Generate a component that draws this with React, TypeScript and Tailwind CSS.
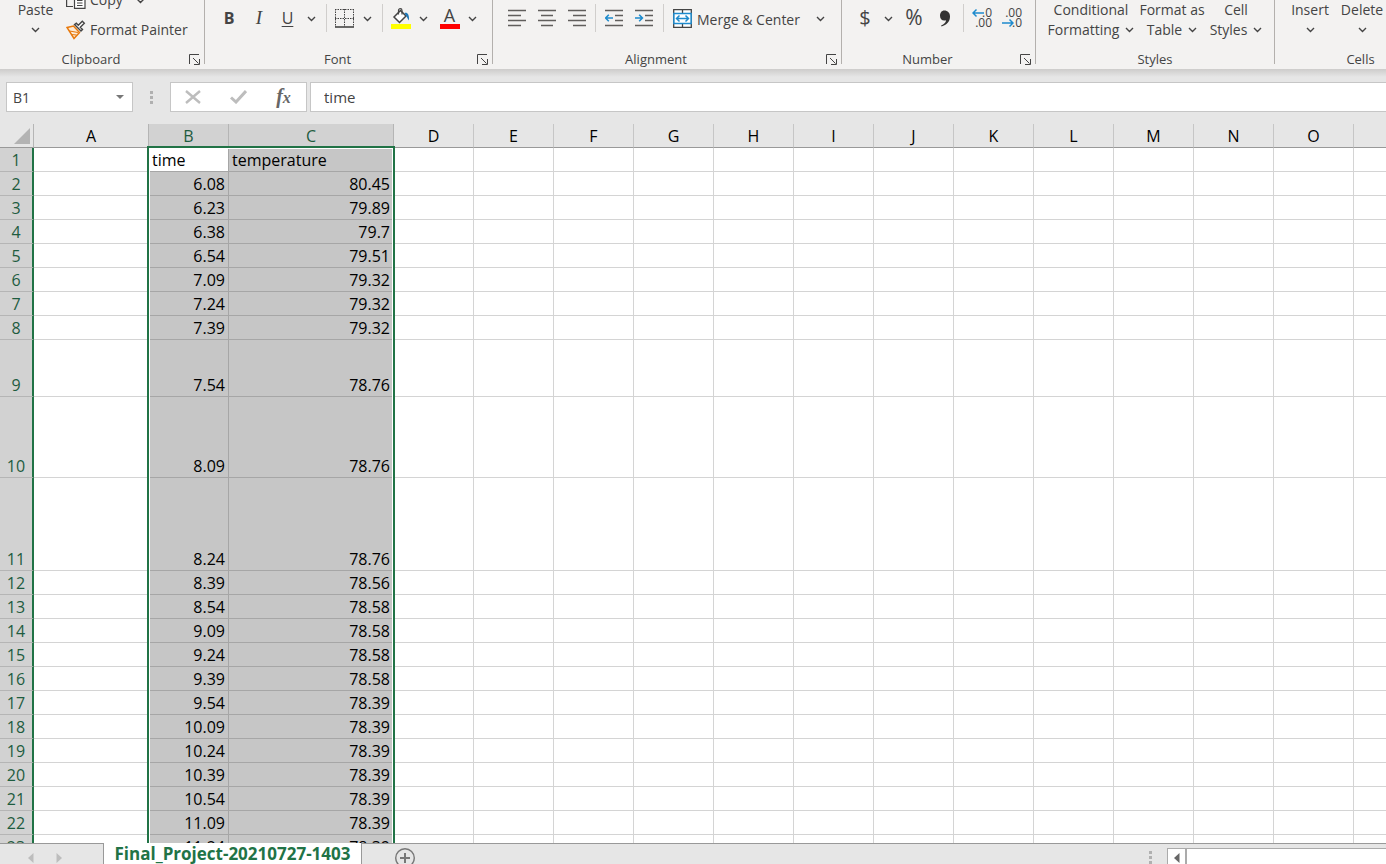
import React, { useState } from 'react';

type rowType = { id: number; height: string; time: string; temperature: string };

const columns = ['D', 'E', 'F', 'G', 'H', 'I', 'J', 'K', 'L', 'M', 'N', 'O', ''];

const data: [string, string][] = [
  ['time', 'temperature'],
  ['6.08', '80.45'],
  ['6.23', '79.89'],
  ['6.38', '79.7'],
  ['6.54', '79.51'],
  ['7.09', '79.32'],
  ['7.24', '79.32'],
  ['7.39', '79.32'],
  ['7.54', '78.76'],
  ['8.09', '78.76'],
  ['8.24', '78.76'],
  ['8.39', '78.56'],
  ['8.54', '78.58'],
  ['9.09', '78.58'],
  ['9.24', '78.58'],
  ['9.39', '78.58'],
  ['9.54', '78.39'],
  ['10.09', '78.39'],
  ['10.24', '78.39'],
  ['10.39', '78.39'],
  ['10.54', '78.39'],
  ['11.09', '78.39'],
  ['11.24', '78.39'],
];

// rows that were stretched by hand, all the others keep the default height
const tallRows: Record<number, string> = { 9: 'h-[57px]', 10: 'h-[81px]', 11: 'h-[93px]' };

const rows: rowType[] = data.map(([time, temperature], i) => ({
  id: i + 1,
  height: tallRows[i + 1] ?? 'h-6',
  time,
  temperature,
}));

const Chevron = () => (
  <svg width="9" height="6" viewBox="0 0 9 6" fill="none" stroke="#444" strokeWidth="1.4">
    <path d="M1 1l3.5 3.5L8 1" />
  </svg>
);

const DropButton = ({ label }: { label: string }) => (
  <button aria-label={label} className="flex h-6 w-5 shrink-0 items-center justify-center pt-0.5">
    <Chevron />
  </button>
);

const Separator = ({ className }: { className: string }) => (
  <span className={`h-7 w-px shrink-0 bg-[#d0cecc] ${className}`} />
);

const Launcher = ({ label }: { label: string }) => (
  <button aria-label={label} className="flex w-[22px] items-center justify-end pr-1">
    <svg width="11" height="11" viewBox="0 0 11 11" fill="none" stroke="#444" strokeWidth="1">
      <path d="M.5 10V.5H10M4 4l5.5 5.5M10.5 5v5.5H5" />
    </svg>
  </button>
);

type groupProps = { title: string; width: string; launcher?: boolean; children: React.ReactNode };

const Group = ({ title, width, launcher, children }: groupProps) => (
  <section className={`flex h-16 shrink-0 flex-col justify-end border-r border-[#b3b0ad] ${width}`}>
    <div className="flex h-[54px] min-h-0">{children}</div>
    <div className="flex h-[10px] items-center">
      <span className="flex-1 text-center text-[13px] leading-[10px]">{title}</span>
      {launcher && <Launcher label={`${title} settings`} />}
    </div>
  </section>
);

const Lines = ({ kind }: { kind: 'left' | 'center' | 'right' }) => {
  const d = {
    left: 'M0 1.5h18M0 6.5h13M0 11.5h18M0 16.5h13',
    center: 'M0 1.5h18M3 6.5h12M0 11.5h18M3 16.5h12',
    right: 'M0 1.5h18M5 6.5h13M0 11.5h18M5 16.5h13',
  }[kind];
  return (
    <svg width="18" height="18" viewBox="0 0 18 18" stroke="#605e5c" strokeWidth="1.4">
      <path d={d} />
    </svg>
  );
};

const Indent = ({ increase }: { increase?: boolean }) => (
  <svg width="18" height="18" viewBox="0 0 18 18" fill="none" strokeWidth="1.4">
    <path stroke="#605e5c" d="M0 1.5h18M10 6.5h8M10 11.5h8M0 16.5h18" />
    <path
      stroke="#1e8bcd"
      strokeWidth="1.6"
      d={increase ? 'M0 9h7M4.2 5.8L7.4 9l-3.2 3.2' : 'M8 9H1M3.8 5.8L.6 9l3.2 3.2'}
    />
  </svg>
);

const CopyIcon = () => (
  <svg width="20" height="20" viewBox="0 0 20 20" fill="none" stroke="#444" strokeWidth="1.2">
    <path d="M7 16.5H.6V1h8l2 2" />
    <path fill="#fff" d="M8.5 5h7l3.5 3.5v9.9H8.5z" />
    <path d="M11 10.5h5.5M11 13h5.5M11 15.5h5.5" />
  </svg>
);

const PainterIcon = () => (
  <svg width="20" height="20" viewBox="0 0 20 20" fill="none">
    <path d="M1 7.5l6.5-1.500 6 6.500-5.500 6z" fill="#fcebd7" stroke="#e8790c" strokeWidth="1.5" />
    <path d="M3.5 11l8.5 1.5M5.5 14.5l5 .5" stroke="#e8790c" strokeWidth="1.2" />
    <path d="M8.5 4.5l6.5 6.5 1.5-1.5-2.2-2.2 4-4-2-2-4 4-2-2.2z" fill="#fff" stroke="#444" strokeWidth="1.4" />
  </svg>
);

const BordersIcon = () => (
  <svg width="19" height="19" viewBox="0 0 19 19" fill="none" stroke="#444">
    <path strokeDasharray="1.5 1" d="M0 .5h19M0 9.5h19M.5 0v18M9.5 0v18M18.5 0v18" />
    <path strokeWidth="1.6" d="M0 18h19" />
  </svg>
);

const FillIcon = () => (
  <svg width="20" height="22" viewBox="0 0 20 22" fill="none">
    <path d="M9.5 3.5L3 10l5.5 5.5L15 9z" fill="#fff" stroke="#444" strokeWidth="1.5" />
    <path d="M7.5 7.5v-4c0-2.5 3.5-2.5 3.5 0v4" stroke="#444" strokeWidth="1.2" />
    <path d="M13.5 6c2.5-1 5 1 4.500 7.500-1.500-1.500-2-4-3.500-5.500z" fill="#1e78b8" />
    <path d="M0 17h20v5H0z" fill="#ff0" />
  </svg>
);

const MergeIcon = () => (
  <svg className="shrink-0" width="19" height="19" viewBox="0 0 19 19" fill="none">
    <path fill="#fff" stroke="#444" strokeWidth="1.3" d="M.7.7h17.6v17.6H.7zM9.5.7v4M9.5 14v4" />
    <path fill="#fff" stroke="#1e8bcd" strokeWidth="1.5" d="M.9 4.5h17.2v10H.9z" />
    <path stroke="#1e8bcd" strokeWidth="1.5" d="M3.5 9.5h12M6.5 6.5l-3 3 3 3M12.5 6.5l3 3-3 3" />
  </svg>
);

const CommaIcon = () => (
  <svg width="12" height="17" viewBox="0 0 12 17" fill="#333">
    <path d="M5.2.5C8.8.5 11 3 11 6.5c0 5-3.200 8.500-8.500 10l-.4-1c3-1.200 4.700-3 5-5.300-.6.3-1.200.4-1.900.4C2.700 10.600 1 8.600 1 5.800 1 2.700 2.800.5 5.200.5z" />
  </svg>
);

const DecimalIcon = ({ decrease }: { decrease?: boolean }) => (
  <span className="relative flex w-5 flex-col items-end text-[12px] leading-[10px]">
    <span>{decrease ? '.00' : '.0'}</span>
    <span>{decrease ? '.0' : '.00'}</span>
    <svg
      className={decrease ? 'absolute bottom-0 left-0' : 'absolute top-0 left-0'}
      width="12" height="10" viewBox="0 0 12 10" fill="none" stroke="#1e8bcd" strokeWidth="1.5"
    >
      <path d={decrease ? 'M0 5h11M7.5 1.5L11 5 7.5 8.5' : 'M12 5H1M4.5 1.5L1 5l3.5 3.5'} />
    </svg>
  </span>
);

type bigProps = { top: string; bottom?: string; width: string };

const BigButton = ({ top, bottom, width }: bigProps) => (
  <button className={`flex h-10 flex-col items-center text-[14px] leading-5 whitespace-nowrap ${width}`}>
    <span>{top}</span>
    <span className="flex h-5 items-center gap-1.5">
      {bottom}
      <Chevron />
    </span>
  </button>
);

const iconButton = 'flex h-7 shrink-0 items-center justify-center';

const Ribbon = () => (
  <header className="flex h-[69px] shrink-0 overflow-hidden bg-[#f3f2f1] text-[#444]">
    <Group title="Clipboard" width="w-[205px]" launcher>
      <div className="flex pl-2">
        <BigButton top="Paste" width="w-[55px]" />
        <div className="flex flex-col justify-end gap-2.5 pb-3.5 pl-[3px] text-[14px] leading-5">
          <div className="flex h-5 shrink-0 items-center">
            <button className="flex items-center gap-1"><CopyIcon />Copy</button>
            <span className="pl-2"><DropButton label="Copy options" /></span>
          </div>
          <button className="flex h-5 shrink-0 items-center gap-1 whitespace-nowrap"><PainterIcon />Format Painter</button>
        </div>
      </div>
    </Group>

    <Group title="Font" width="w-[288px]" launcher>
      <div className="flex h-9 items-center pl-[9px]">
        <button className={`${iconButton} w-[30px] text-[16px] font-bold`}>B</button>
        <button className={`${iconButton} w-[30px] font-["Liberation_Serif"] text-[19px] italic`}>I</button>
        <button className={`${iconButton} w-[27px] text-[16px] underline underline-offset-2`}>U</button>
        <DropButton label="Underline options" />
        <Separator className="mx-[5px]" />
        <button aria-label="Borders" className={`${iconButton} w-[25px]`}><BordersIcon /></button>
        <DropButton label="Border options" />
        <Separator className="mx-[5px]" />
        <button aria-label="Fill color" className={`${iconButton} w-[25px]`}><FillIcon /></button>
        <DropButton label="Fill color options" />
        <button className="ml-1 flex w-[25px] shrink-0 flex-col items-center text-[18px] leading-[17px]">
          A<span className="h-[5px] w-5 bg-[#f00]" />
        </button>
        <DropButton label="Font color options" />
      </div>
    </Group>

    <Group title="Alignment" width="w-[349px]" launcher>
      <div className="flex h-9 items-center pl-[9px]">
        <button aria-label="Align left" className={`${iconButton} w-[30px]`}><Lines kind="left" /></button>
        <button aria-label="Center" className={`${iconButton} w-[30px]`}><Lines kind="center" /></button>
        <button aria-label="Align right" className={`${iconButton} w-[30px]`}><Lines kind="right" /></button>
        <Separator className="mx-[3px]" />
        <button aria-label="Decrease indent" className={`${iconButton} w-[30px]`}><Indent /></button>
        <button aria-label="Increase indent" className={`${iconButton} w-[30px]`}><Indent increase /></button>
        <Separator className="ml-1" />
        <button className="flex w-[146px] items-center gap-[5px] pl-[9px] text-[14px] whitespace-nowrap">
          <MergeIcon />
          <span className="pt-0.5">Merge &amp; Center</span>
        </button>
        <DropButton label="Merge options" />
      </div>
    </Group>

    <Group title="Number" width="w-[194px]" launcher>
      <div className="flex h-9 items-center pl-[10px]">
        <button className={`${iconButton} w-[26px] text-[20px]`}>$</button>
        <DropButton label="Currency options" />
        <button className={`${iconButton} w-8 text-[21px]`}>%</button>
        <button aria-label="Comma style" className={`${iconButton} w-[30px]`}><CommaIcon /></button>
        <Separator className="mx-[3px]" />
        <button aria-label="Increase decimal" className={`${iconButton} w-[30px]`}><DecimalIcon /></button>
        <button aria-label="Decrease decimal" className={`${iconButton} w-[30px]`}><DecimalIcon decrease /></button>
      </div>
    </Group>

    <Group title="Styles" width="w-[239px]">
      <div className="flex pl-2">
        <BigButton top="Conditional" bottom="Formatting" width="w-[94px]" />
        <BigButton top="Format as" bottom="Table" width="w-[68px]" />
        <BigButton top="Cell" bottom="Styles" width="w-[60px]" />
      </div>
    </Group>

    <Group title="Cells" width="w-[172px]">
      <div className="flex pl-[9px]">
        <BigButton top="Insert" width="w-[52px]" />
        <BigButton top="Delete" width="w-[52px]" />
      </div>
    </Group>
  </header>
);

const Dots = () => (
  <span className="flex flex-col gap-0.5">
    <span className="size-[3px] bg-[#b0b0b0]" />
    <span className="size-[3px] bg-[#b0b0b0]" />
    <span className="size-[3px] bg-[#b0b0b0]" />
  </span>
);

const FormulaBar = () => {
  const [cell, setCell] = useState<string>('B1');
  const [formula, setFormula] = useState<string>('time');

  return (
    <div className="shrink-0 bg-[#e6e6e6] pb-3 text-[15px] text-[#444]">
      <div className="h-2 bg-linear-to-b from-[#cdcccb] to-[#e6e6e6]" />
      <div className="mt-[5px] flex h-[30px] pl-1.5">
        <div className="flex w-[127px] border border-[#c6c6c6] bg-white">
          <input
            aria-label="Name box"
            value={cell}
            onChange={(e) => setCell(e.target.value)}
            className="w-full min-w-0 pl-1.5 text-[14px] outline-none"
          />
          <button aria-label="Named ranges" className="flex w-6 shrink-0 items-center justify-center">
            <svg width="8" height="4" viewBox="0 0 8 4" fill="#777"><path d="M0 0h8L4 4z" /></svg>
          </button>
        </div>
        <div className="flex w-[37px] items-center justify-center"><Dots /></div>
        <div className="flex w-[137px] items-center border border-[#c6c6c6] bg-white">
          <button aria-label="Cancel" className="flex w-11 justify-center">
            <svg width="16" height="14" viewBox="0 0 16 14" stroke="#bdbdbd" strokeWidth="2.4"><path d="M1 1l14 12M15 1L1 13" /></svg>
          </button>
          <button aria-label="Enter" className="flex w-[46px] justify-center">
            <svg width="17" height="14" viewBox="0 0 17 14" fill="none" stroke="#bdbdbd" strokeWidth="3"><path d="M1 7.5l5 4.500L16 1" /></svg>
          </button>
          <button className='flex w-[45px] justify-center font-["Liberation_Serif"] text-[20px] leading-5 font-bold text-[#666] italic'>
            <span>f</span><span className="pt-0.5 text-[16px]">x</span>
          </button>
        </div>
        <input
          aria-label="Formula bar"
          value={formula}
          onChange={(e) => setFormula(e.target.value)}
          className="ml-[3px] min-w-0 flex-1 border border-r-0 border-[#c6c6c6] bg-white pl-[13px] outline-none"
        />
      </div>
    </div>
  );
};

const Sheet = () => {
  const head = 'h-6 border-b border-[#999] p-0 text-center align-bottom font-normal leading-[21px]';
  const line = 'border-b border-[#d4d4d4]';
  const picked = 'border-r border-b border-[#a6a6a6] align-bottom leading-[21px] p-0';

  return (
    <main className="relative min-h-0 flex-1 overflow-hidden bg-white">
      <table className="w-full table-fixed border-separate border-spacing-0 text-[16px] text-black">
        <colgroup>
          <col className="w-[34px]" />
          <col className="w-[115px]" />
          <col className="w-20" />
          <col className="w-[165px]" />
          {columns.map((name) => <col key={name} className={name ? 'w-20' : ''} />)}
        </colgroup>
        <thead className="bg-[#e6e6e6]">
          <tr>
            <th aria-label="Select all" className={`${head} border-r border-r-[#b5b5b5]`}>
              <svg className="mr-[3px] mb-[3px] ml-auto" width="16" height="16" viewBox="0 0 16 16" fill="#b3b3b3"><path d="M16 0v16H0z" /></svg>
            </th>
            <th className={`${head} border-r border-r-[#b5b5b5]`}>A</th>
            <th className={`${head} border-r border-r-[#b5b5b5] bg-[#d2d2d2] text-[#1e5c3f]`}>B</th>
            <th className={`${head} border-r border-r-[#b5b5b5] bg-[#d2d2d2] text-[#1e5c3f]`}>C</th>
            {columns.map((name) => (
              <th key={name} className={`${head} ${name && 'border-r border-r-[#c6c6c6]'}`}>{name}</th>
            ))}
          </tr>
        </thead>
        <tbody>
          {rows.map((row) => (
            <tr key={row.id} className={row.height}>
              <th className="border-r-2 border-b border-r-[#217346] border-b-[#b5b5b5] bg-[#d2d2d2] p-0 text-center align-bottom leading-[21px] font-normal text-[#1e5c3f]">
                {row.id}
              </th>
              <td className={`${line} border-r`} />
              <td className={`${picked} ${row.id === 1 ? 'bg-white pl-[3px]' : 'bg-[#c6c6c6] pr-[3px] text-right'}`}>
                {row.time}
              </td>
              <td className={`${picked} bg-[#c6c6c6] ${row.id === 1 ? 'pl-[3px]' : 'pr-[3px] text-right'}`}>
                {row.temperature}
              </td>
              {columns.map((name) => <td key={name} className={`${line} ${name && 'border-r'}`} />)}
            </tr>
          ))}
        </tbody>
      </table>
      {/* outline of the selected range */}
      <div className="pointer-events-none absolute top-[22px] -bottom-4 left-[147px] w-[248px] border-2 border-[#217346] shadow-[inset_0_0_0_1px_#fff]" />
    </main>
  );
};

const SheetTabs = () => (
  <footer className="flex h-[21px] shrink-0 overflow-hidden bg-[#e6e6e6]">
    <div className="flex w-[104px] shrink-0 border-t border-r border-[#999] pt-[9px] pl-7">
      <button aria-label="Previous sheet" className="flex h-2.5 w-7">
        <svg width="6" height="10" viewBox="0 0 6 10" fill="#bdbdbd"><path d="M5.5 0v10L0 5z" /></svg>
      </button>
      <button aria-label="Next sheet" className="flex h-2.5">
        <svg width="6" height="10" viewBox="0 0 6 10" fill="#bdbdbd"><path d="M.5 0v10L6 5z" /></svg>
      </button>
    </div>
    <button className="w-[257px] shrink-0 bg-white text-[17px] leading-[22px] font-bold text-[#217346]">
      Final_Project-20210727-1403
    </button>
    <div className="flex flex-1 items-start border-t border-l border-[#999] pl-8">
      <button aria-label="New sheet" className="mt-1 shrink-0">
        <svg width="22" height="20" viewBox="0 0 22 20" fill="none" stroke="#777">
          <circle cx="11" cy="10" r="9.3" strokeWidth="1.4" />
          <path strokeWidth="2" d="M6 10h10M11 5v10" />
        </svg>
      </button>
    </div>
    <div className="flex w-[237px] shrink-0 border-t border-[#999] pt-1">
      <div className="w-[18px] pt-[3px]"><Dots /></div>
      <button aria-label="Scroll left" className="flex w-[18px] shrink-0 justify-center border-t border-l border-[#ababab] bg-white pt-1">
        <svg width="6" height="10" viewBox="0 0 6 10" fill="#666"><path d="M5.5 0v10L0 5z" /></svg>
      </button>
      <div className="flex-1 border-t border-l-2 border-[#ababab] bg-white" />
    </div>
  </footer>
);

const App = (): React.JSX.Element => {
  return (
    <div className='flex h-screen flex-col overflow-hidden font-["Open_Sans","Noto_Sans",sans-serif]'>
      <Ribbon />
      <FormulaBar />
      <Sheet />
      <SheetTabs />
    </div>
  );
};

export default App;
